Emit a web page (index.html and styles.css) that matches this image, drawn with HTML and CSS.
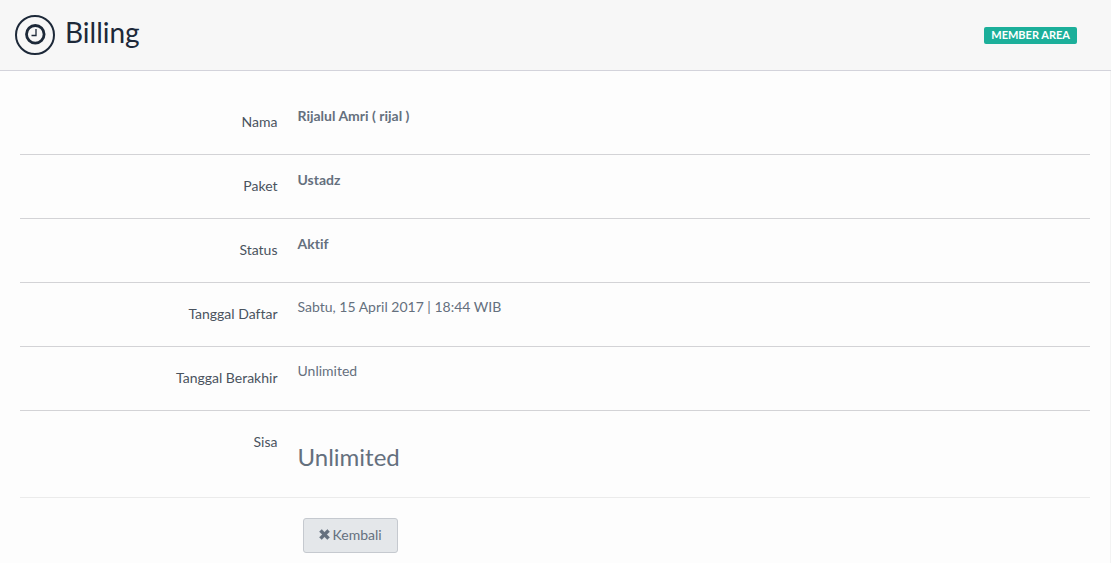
FILE: index.html
```html
<!DOCTYPE html>
<html lang="id">
<head>
<meta charset="utf-8">
<title>Billing</title>
<link rel="stylesheet" href="styles.css">
</head>
<body>
<header class="page-header">
  <svg class="page-icon" width="40" height="40" viewBox="0 0 40 40" fill="none" stroke="currentColor" aria-hidden="true">
    <circle cx="20" cy="20" r="19" stroke-width="2"/>
    <circle cx="20.3" cy="19.3" r="8.800" stroke-width="2.800"/>
    <path d="M21 14v6.500h-4.500" stroke-width="1.300"/>
  </svg>
  <h1 class="page-title">Billing</h1>
  <span class="badge">MEMBER AREA</span>
</header>
<main class="panel">
  <dl class="details">
    <div class="row"><dt class="label">Nama</dt><dd class="value strong">Rijalul Amri ( rijal )</dd></div>
    <div class="row"><dt class="label">Paket</dt><dd class="value strong">Ustadz</dd></div>
    <div class="row"><dt class="label">Status</dt><dd class="value strong">Aktif</dd></div>
    <div class="row"><dt class="label">Tanggal Daftar</dt><dd class="value">Sabtu, 15 April 2017 | 18:44 WIB</dd></div>
    <div class="row"><dt class="label">Tanggal Berakhir</dt><dd class="value">Unlimited</dd></div>
    <div class="row row-last"><dt class="label">Sisa</dt><dd class="value large">Unlimited</dd></div>
  </dl>
  <div class="actions">
    <button class="button" type="button">
      <svg width="11" height="11" viewBox="0 0 11 11" aria-hidden="true"><path d="M2.700.5 5.500 3.300 8.300.5 10.500 2.700 7.700 5.500 10.500 8.300 8.300 10.500 5.500 7.700 2.700 10.500.5 8.300 3.300 5.500.5 2.700z" fill="currentColor" stroke="currentColor" stroke-width=".5" stroke-linejoin="round"/></svg>
      Kembali
    </button>
  </div>
</main>
</body>
</html>
```
FILE: styles.css
```css
* {
  box-sizing: border-box;
}

body {
  margin: 0;
  min-height: 100vh;
  display: flex;
  flex-direction: column;
  background: #fdfdfd;
  color: #65707e;
  font: 14px/20px Lato, sans-serif;
  font-variant-ligatures: none;
}

.page-header {
  display: flex;
  align-items: center;
  gap: 10px;
  padding: 15px 34px 15px 15px;
  background: #f7f7f7;
  border-bottom: 1px solid #d3d3db;
  color: #1d2939;
}

.page-icon {
  flex: none;
}

.page-title {
  flex: 1;
  margin: 0 0 6px;
  font-size: 28px;
  line-height: 34px;
  font-weight: 400;
}

.badge {
  padding: 2px 7px 4px;
  border-radius: 2px;
  background: #1caf9a;
  color: #fff;
  font-size: 11px;
  line-height: 11px;
  font-weight: 700;
}

.panel {
  flex: 1;
  padding: 20px 20px 10px;
  border-right: 1px solid #f3f3f3;
}

.details {
  margin: 0;
}

.row {
  display: grid;
  grid-template-columns: 1fr 3fr;
  border-bottom: 1px solid #d3d3d6;
}

.row-last {
  border-bottom-color: #ebebeb;
}

.label {
  padding: 21px 10px 22px;
  color: #4a535e;
  text-align: right;
}

.value {
  margin: 0;
  padding: 14px 10px;
}

.strong {
  padding-top: 15px;
  font-weight: 700;
}

.large {
  padding: 30px 10px 24px;
  font-size: 24px;
  line-height: 32px;
}

.actions {
  padding-top: 20px;
  padding-left: calc(25% + 15px);
}

.button {
  display: flex;
  align-items: center;
  gap: 3px;
  padding: 6px 15px 8px;
  border: 1px solid #c5c9cf;
  border-radius: 3px;
  background: #e4e7ea;
  color: #65707e;
  font: inherit;
  line-height: 19px;
}
```
